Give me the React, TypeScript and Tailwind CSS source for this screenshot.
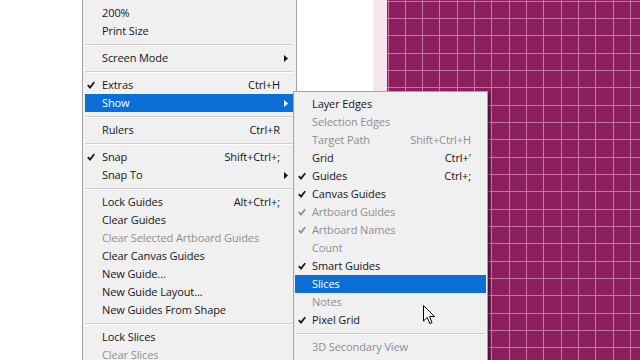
import React from 'react';

type Entry =
  | 'sep'
  | {
      label: string;
      shortcut?: string;
      checked?: boolean;
      disabled?: boolean;
      sub?: boolean;
      active?: boolean;
    };

const viewMenu: Entry[] = [
  { label: '200%' },
  { label: 'Print Size' },
  'sep',
  { label: 'Screen Mode', sub: true },
  'sep',
  { label: 'Extras', shortcut: 'Ctrl+H', checked: true },
  { label: 'Show', sub: true, active: true },
  'sep',
  { label: 'Rulers', shortcut: 'Ctrl+R' },
  'sep',
  { label: 'Snap', shortcut: 'Shift+Ctrl+;', checked: true },
  { label: 'Snap To', sub: true },
  'sep',
  { label: 'Lock Guides', shortcut: 'Alt+Ctrl+;' },
  { label: 'Clear Guides' },
  { label: 'Clear Selected Artboard Guides', disabled: true },
  { label: 'Clear Canvas Guides' },
  { label: 'New Guide...' },
  { label: 'New Guide Layout...' },
  { label: 'New Guides From Shape' },
  'sep',
  { label: 'Lock Slices' },
  { label: 'Clear Slices', disabled: true },
];

const showMenu: Entry[] = [
  { label: 'Layer Edges' },
  { label: 'Selection Edges', disabled: true },
  { label: 'Target Path', shortcut: 'Shift+Ctrl+H', disabled: true },
  { label: 'Grid', shortcut: "Ctrl+'" },
  { label: 'Guides', shortcut: 'Ctrl+;', checked: true },
  { label: 'Canvas Guides', checked: true },
  { label: 'Artboard Guides', checked: true, disabled: true },
  { label: 'Artboard Names', checked: true, disabled: true },
  { label: 'Count', disabled: true },
  { label: 'Smart Guides', checked: true },
  { label: 'Slices', active: true },
  { label: 'Notes', disabled: true },
  { label: 'Pixel Grid', checked: true },
  'sep',
  { label: '3D Secondary View', disabled: true },
];

const Check = () => (
  <svg width="8" height="8" viewBox="0 0 8 8" className="block">
    <path d="M0.8 4.2 L3 6.6 L7.2 1.2" fill="none" stroke="currentColor" strokeWidth="1.8" />
  </svg>
);

const Arrow = () => (
  <svg width="4" height="7" viewBox="0 0 4 7" className="block">
    <polygon points="0,0 4,3.5 0,7" fill="currentColor" />
  </svg>
);

const MenuList = ({ items, checkPad, rightPad }: { items: Entry[]; checkPad: string; rightPad: string }) => (
  <>
    {items.map((it, i) => {
      if (it === 'sep')
        return (
          <div key={i} className="flex h-[9px] items-center px-[1px]">
            <div className="h-[2px] w-full border-t border-b border-t-[#cfcfcf] border-b-white" />
          </div>
        );
      const color = it.active ? 'bg-[#0b6fd7] text-white' : it.disabled ? 'text-[#8f8f8f]' : 'text-[#161616]';
      return (
        <div key={i} className={`flex h-[18px] items-center ${color}`}>
          <div className={`flex w-[17px] shrink-0 items-center ${checkPad}`}>{it.checked && <Check />}</div>
          <span className="flex-1 whitespace-nowrap">{it.label}</span>
          {it.shortcut && <span className="whitespace-nowrap">{it.shortcut}</span>}
          <div className={`flex shrink-0 items-center pl-[4px] ${rightPad}`}>{it.sub && <Arrow />}</div>
        </div>
      );
    })}
  </>
);

const Grid = () => {
  const xs = Array.from({ length: 16 }, (_, k) => Math.round(0.5 + k * 17.33));
  const ys = Array.from({ length: 22 }, (_, k) => Math.round(0.7 + k * 17.33));
  return (
    <svg width="253" height="360" className="block">
      <rect width="253" height="360" fill="#8b1f5d" />
      {xs.map((x) => (
        <rect key={'x' + x} x={x} y="0" width="1" height="360" fill="#cc72a6" />
      ))}
      {ys.map((y) => (
        <rect key={'y' + y} x="0" y={y} width="253" height="1" fill="#cc72a6" />
      ))}
    </svg>
  );
};

const Cursor = () => (
  <svg width="13" height="21" viewBox="0 0 13 21" className="block">
    <path d="M0.5 0.5 L0.5 16 L4.2 12.4 L6.8 18.6 L9 17.6 L6.5 11.6 L11.5 11.6 Z" fill="white" stroke="black" strokeWidth="1" />
  </svg>
);

export default function App() {
  return (
    <div
      className="relative flex h-[360px] w-[640px] overflow-hidden bg-white text-[11px] tracking-[-0.1px]"
      style={{ fontFamily: '"Open Sans", "Noto Sans", sans-serif' }}
    >
      <div className="w-[373px] bg-white" />
      <div className="w-[14px] bg-[#f4e7ef]" />
      <div className="flex-1">
        <Grid />
      </div>

      {/* View menu */}
      <div className="absolute left-[82px] top-0 h-[360px] w-[215px] border-x border-x-[#a3a3a3] bg-[#f0f0f0] pt-[4px]">
        <div className="mx-[2px]">
          <MenuList items={viewMenu} checkPad="pl-[2px]" rightPad="w-[14px]" />
        </div>
      </div>

      {/* Show submenu */}
      <div className="absolute left-[293px] top-[91px] h-[280px] w-[195px] border border-[#a3a3a3] bg-[#f0f0f0] pt-[3px] shadow-[2px_2px_2px_rgba(0,0,0,0.45)]">
        <div className="mx-[1px]">
          <MenuList items={showMenu} checkPad="pl-[3px]" rightPad="w-[15px]" />
        </div>
      </div>

      <div className="absolute left-[423px] top-[305px]">
        <Cursor />
      </div>
    </div>
  );
}
